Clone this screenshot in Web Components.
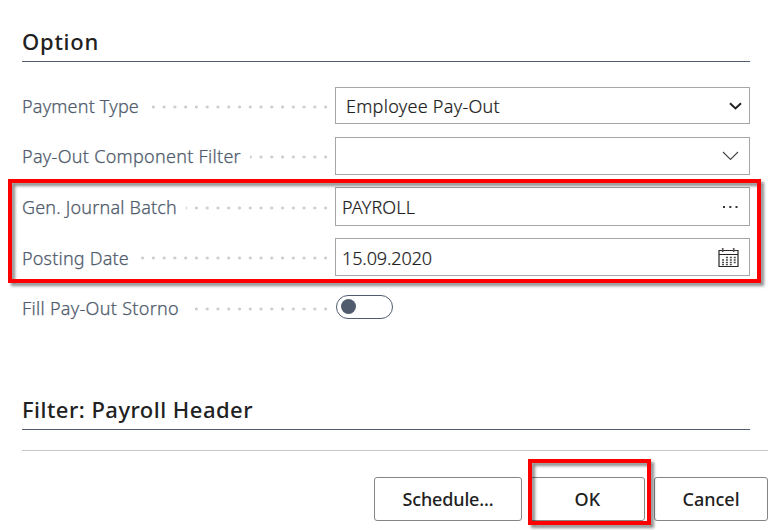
<!DOCTYPE html>
<html lang="en"><head><meta charset="utf-8"><title>Option</title>
<style>
body{margin:0;width:774px;height:530px;overflow:hidden;background:#fff;color:#212121;font-family:"Noto Sans","Open Sans",sans-serif;font-size:18px}
</style></head><body>
<request-page></request-page>
<script>
const make=(tag,html,init)=>customElements.define(tag,class extends HTMLElement{
  constructor(){super();this.attachShadow({mode:'open'}).innerHTML=html}
  connectedCallback(){if(init)init.call(this,this.shadowRoot)}
});

// One line of text tracked so that it fills the width in its "w" attribute.
make('fit-text',`<style>:host{display:inline-block;white-space:pre;line-height:26px;flex:none}span{display:inline-block}</style><span><slot></slot></span>`,function(r){
  const s=r.querySelector('span'),w=+this.getAttribute('w');
  const n=this.textContent.length,now=s.getBoundingClientRect().width;
  if(w&&now){s.style.letterSpacing=((w-now)/n)+'px';this.style.width=w+'px'}
});

make('group-title',`<style>:host{display:flex;box-sizing:border-box;width:728px;height:34px;border-bottom:1px solid #505c6d;font-size:22px;font-weight:500;color:#212121}</style><slot></slot>`);

make('field-row',`<style>
:host{display:grid;grid-template-columns:305px 415px;column-gap:8px;align-items:center;width:728px}
.l{display:flex;align-items:center;gap:9px;color:#505c6d;font-weight:350;-webkit-text-stroke:.25px}
i{flex:1;height:4px;margin-top:2px;background:radial-gradient(circle at center,#cdced2 0 1.1px,transparent 1.9px) right -4px center/10.77px 4px repeat-x}
</style><div class="l"><slot name="label"></slot><i></i></div><slot></slot>`);

make('value-box',`<style>:host{display:flex;box-sizing:border-box;width:415px;height:var(--h,38px);border:1px solid #a6a6a6;align-items:center;justify-content:space-between;padding:0 10px 0 var(--pad,6px);color:#212121;font-weight:350;-webkit-text-stroke:.2px}::slotted(svg){flex:none;display:block}</style><slot></slot>`);

make('toggle-switch',`<style>:host{display:flex;align-items:center;box-sizing:border-box;width:57px;height:24px;margin-left:1px;margin-top:-3px;border:1px solid #505c6d;border-radius:12px;padding-left:4px}b{width:15px;height:15px;border-radius:50%;background:#505c6d}</style><b></b>`);

make('push-button',`<style>:host{display:flex;box-sizing:border-box;height:44px;border:1px solid #858585;border-radius:3px;align-items:center;justify-content:center;font-weight:500;color:#212121}</style><slot></slot>`);

// Highlight frame laid over the controls it marks.
make('mark-frame',`<style>:host{position:absolute;box-sizing:border-box;border:4px solid #f00;filter:drop-shadow(3px 3px 1.5px rgba(0,0,0,.45));pointer-events:none}</style>`);

make('request-page',`<style>
:host{display:block;position:relative;width:774px;height:530px}
main{padding:28px 0 0 22px}
.rows{display:grid;grid-template-rows:50px 50px 51px 50px 43px;align-items:start;margin-top:25px}
field-row:last-child{padding-top:7px}
.date{padding-top:1px}
.second{margin-top:65px}
footer{display:flex;box-sizing:border-box;margin-top:20px;width:746px;border-top:1px solid #c8c8c8;padding-top:26px;justify-content:flex-end}
</style>
<main>
<group-title><fit-text w="77">Option</fit-text></group-title>
<div class="rows">
<field-row><fit-text slot="label" w="117">Payment Type</fit-text><value-box style="--h:37px;--pad:10px;padding-right:7px"><fit-text w="154">Employee Pay-Out</fit-text><svg width="13" height="10" viewBox="0 0 13 10"><path d="M1 2.2 6.5 7.4 12 2.2" fill="none" stroke="#212121" stroke-width="2"/></svg></value-box></field-row>
<field-row><fit-text slot="label" w="219">Pay-Out Component Filter</fit-text><value-box><span></span><svg width="17" height="10" viewBox="0 0 17 10"><path d="M1 1 8.5 8.5 16 1" fill="none" stroke="#444" stroke-width="1.1"/></svg></value-box></field-row>
<field-row><fit-text slot="label" w="155">Gen. Journal Batch</fit-text><value-box style="--h:39px"><fit-text w="73">PAYROLL</fit-text><svg width="17" height="4" viewBox="0 0 17 4"><path d="M1 1h2v2H1zM7.3 1h2v2h-2zM13.5 1h2v2h-2z" fill="#333"/></svg></value-box></field-row>
<field-row class="date" style="margin-top:-1px"><fit-text slot="label" w="107" style="padding-top:2px">Posting Date</fit-text><value-box><fit-text w="90" style="padding-top:2px">15.09.2020</fit-text><svg style="margin-top:2px" width="21" height="20" viewBox="0 0 21 20"><path d="M1 2.5h19v16H1zM1 6.5h19" fill="none" stroke="#292529" stroke-width="1.2"/><path d="M4.7 0v4M15.7 0v4" stroke="#555" stroke-width="1.6"/><path d="M8 9.5h10M4 12h14M4 14.5h14M4 16.6h10" stroke="#4b474b" stroke-width="1.3" stroke-dasharray="2 1.9"/></svg></value-box></field-row>
<field-row><fit-text slot="label" w="157">Fill Pay-Out Storno</fit-text><toggle-switch></toggle-switch></field-row>
</div>
<group-title class="second"><fit-text w="231">Filter: Payroll Header</fit-text></group-title>
<footer><push-button style="width:148px"><fit-text w="91">Schedule...</fit-text></push-button><push-button style="width:115px;margin-left:8px"><fit-text w="26">OK</fit-text></push-button><push-button style="width:114px;margin-left:9px"><fit-text w="57">Cancel</fit-text></push-button></footer>
</main>
<mark-frame style="left:8px;top:179px;width:753px;height:104px"></mark-frame>
<mark-frame style="left:528px;top:459px;width:123px;height:66px"></mark-frame>`);
</script></body></html>
